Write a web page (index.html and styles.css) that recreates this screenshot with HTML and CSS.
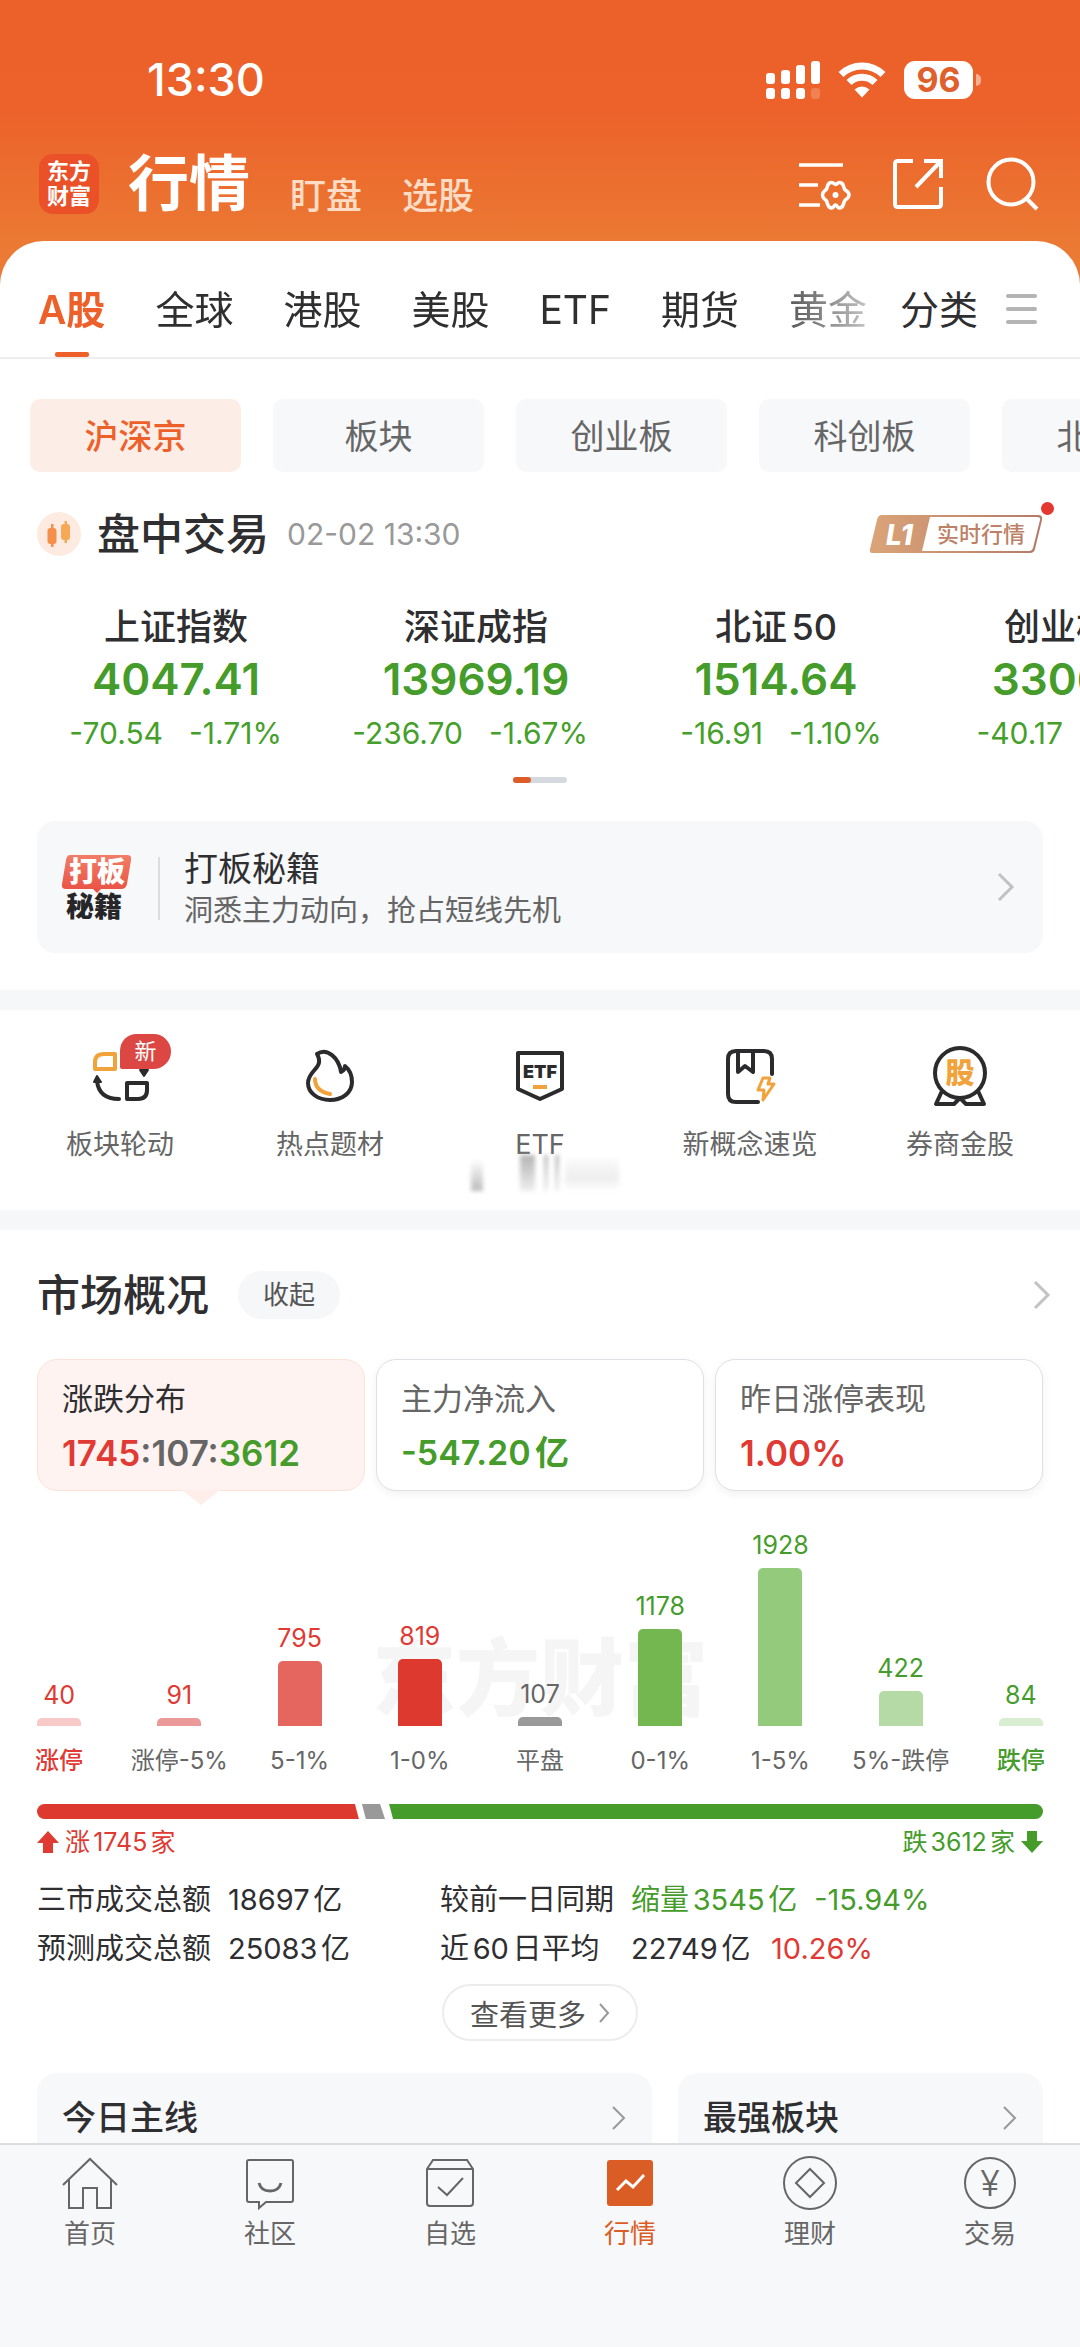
FILE: index.html
```html
<!DOCTYPE html>
<html lang="zh-CN">
<head>
<meta charset="utf-8">
<meta name="viewport" content="width=device-width, initial-scale=1">
<title>行情</title>
<link rel="stylesheet" href="styles.css">
</head>
<body>
<div class="app">
  <div class="status">
    <span class="clock">13:30</span>
    <div class="status-icons">
      <svg width="54" height="38" viewBox="0 0 54 38" fill="#fff" aria-hidden="true">
        <rect x="0" y="12" width="9" height="11" rx="3"/><rect x="15" y="9" width="9" height="14" rx="3"/><rect x="30" y="4" width="9" height="19" rx="3"/><rect x="45" y="0" width="9" height="23" rx="3"/>
        <rect x="0" y="27" width="9" height="11" rx="3"/><rect x="15" y="27" width="9" height="11" rx="3"/><rect x="30" y="27" width="9" height="11" rx="3"/><rect x="45" y="27" width="9" height="11" rx="3" opacity=".2"/>
      </svg>
      <svg width="48" height="36" viewBox="0 0 48 36" aria-hidden="true">
        <g fill="none" stroke="#fff" stroke-width="7"><path d="M3 12.500A30 30 0 0 1 45 12.500"/><path d="M11 20.500A18.500 18.500 0 0 1 37 20.500"/></g>
        <path d="M16.500 27.500Q24 21.500 31.500 27.500L24 35.500Z" fill="#fff"/>
      </svg>
      <div class="battery"><span class="battery-level">96</span></div>
    </div>
  </div>

  <header class="header">
    <div class="logo"><span>东方</span><span>财富</span></div>
    <nav class="titles">
      <a class="title-main" href="#">行情</a>
      <a class="title-sub" href="#">盯盘</a>
      <a class="title-sub" href="#">选股</a>
    </nav>
    <div class="tools">
      <button class="tool" aria-label="设置">
        <svg width="54" height="54" viewBox="0 0 54 54" fill="none" stroke="#fff" stroke-width="3.500">
          <path d="M1 8H45M1 28H20M1 48H22"/>
          <path d="M51 38C51 42 48 41 46.500 44S46 50 42 51C39 51.500 39.500 48 37.500 48S36 51.500 33 51C29 50 30 46.500 28.500 44S24.500 42 24.500 38S27 34.500 28.500 32S29 26 33 25.500C36 25 36 27.500 37.500 27.500S39.500 25 42 25.500C46 26 45 29.500 46.500 32S51 34 51 38Z"/>
          <circle cx="37.500" cy="38" r="3" fill="#fff" stroke="none"/>
        </svg>
      </button>
      <button class="tool" aria-label="分享">
        <svg width="54" height="54" viewBox="0 0 54 54" fill="none" stroke="#fff" stroke-width="4">
          <path d="M21 4H6Q3 4 3 7V47Q3 50 6 50H46Q49 50 49 47V30"/><path d="M32 4H49V21M49 4L24 30"/>
        </svg>
      </button>
      <button class="tool" aria-label="搜索">
        <svg width="54" height="54" viewBox="0 0 54 54" fill="none" stroke="#fff" stroke-width="4">
          <circle cx="25" cy="25" r="22.500"/><path d="M40 41L51 52"/>
        </svg>
      </button>
    </div>
  </header>

  <main class="sheet">
    <nav class="tabs">
      <div class="tab-list">
        <a class="tab tab-active" href="#">A股</a>
        <a class="tab" href="#">全球</a>
        <a class="tab" href="#">港股</a>
        <a class="tab" href="#">美股</a>
        <a class="tab" href="#">ETF</a>
        <a class="tab" href="#">期货</a>
        <a class="tab" href="#">黄金</a>
      </div>
      <a class="tab tab-category" href="#">分类</a>
      <button class="menu" aria-label="菜单"><span></span><span></span><span></span></button>
    </nav>

    <div class="chips">
      <button class="chip chip-active">沪深京</button>
      <button class="chip">板块</button>
      <button class="chip">创业板</button>
      <button class="chip">科创板</button>
      <button class="chip">北交所</button>
    </div>

    <section>
      <div class="session">
        <svg width="44" height="44" viewBox="0 0 44 44" aria-hidden="true">
          <circle cx="22" cy="22" r="22" fill="#fdebe1"/>
          <g fill="#f68e4c"><rect x="10.500" y="16" width="9" height="16" rx="3"/><rect x="14" y="12" width="2.500" height="23"/></g>
          <g fill="#f5a956"><rect x="24" y="12" width="9" height="16" rx="3"/><rect x="27.500" y="9" width="2.500" height="22"/></g>
        </svg>
        <h2 class="heading">盘中交易</h2>
        <time class="session-time">02-02 13:30</time>
        <button class="level" aria-label="L1 实时行情">
          <svg width="174" height="40" viewBox="0 0 174 40">
            <defs><linearGradient id="gold" x1="0" x2="1"><stop offset="0" stop-color="#dba478"/><stop offset="1" stop-color="#b47a68"/></linearGradient></defs>
            <path d="M13 1H169Q174 1 173 6L166 35Q165 39 161 39H4Q0 39 1 35L8 6Q9 1 13 1Z" fill="url(#gold)"/>
            <path d="M61 3H168Q172 3 171 6L164 34Q163 37 160 37H53Z" fill="#fff"/>
            <text x="17" y="31" class="level-tag">L1</text>
            <text x="68" y="28" class="level-text">实时行情</text>
          </svg>
          <span class="dot"></span>
        </button>
      </div>

      <div class="indices">
        <a class="index" href="#"><span class="index-name">上证指数</span><strong class="index-value">4047.41</strong><span class="index-change"><span>-70.54</span><span>-1.71%</span></span></a>
        <a class="index" href="#"><span class="index-name">深证成指</span><strong class="index-value">13969.19</strong><span class="index-change"><span>-236.70</span><span>-1.67%</span></span></a>
        <a class="index" href="#"><span class="index-name">北证50</span><strong class="index-value">1514.64</strong><span class="index-change"><span>-16.91</span><span>-1.10%</span></span></a>
        <a class="index" href="#"><span class="index-name">创业板指</span><strong class="index-value">3306.19</strong><span class="index-change"><span>-40.17</span><span>-1.20%</span></span></a>
      </div>
      <div class="pager"><span></span></div>

      <a class="promo" href="#">
        <svg width="72" height="66" viewBox="0 0 72 66" aria-hidden="true">
          <defs><linearGradient id="coral" x1="0" x2="0" y1="0" y2="1"><stop offset="0" stop-color="#f07e68"/><stop offset="1" stop-color="#ea4f42"/></linearGradient></defs>
          <path d="M9 1H66Q71 1 70 6L66 30Q65 35 60 35H40L36 39L32 35H5Q0 35 1 30L5 6Q6 1 9 1Z" fill="url(#coral)"/>
          <text x="8" y="28" class="promo-logo">打板</text>
          <text x="5" y="63" class="promo-logo promo-logo-dark">秘籍</text>
        </svg>
        <span class="promo-text"><span class="promo-title">打板秘籍</span><span class="promo-sub">洞悉主力动向，抢占短线先机</span></span>
        <svg class="chevron" width="18" height="30" viewBox="0 0 18 30"><path d="M2 2L15 15L2 28"/></svg>
      </a>
    </section>

    <section class="shortcuts">
      <a class="shortcut" href="#">
        <svg width="60" height="60" viewBox="0 0 60 60" fill="none" stroke="#2b2b2d" stroke-width="4" stroke-linejoin="round">
          <path d="M14 8H25V23H5V16Q5 8 14 8Z" stroke="#f1a23b"/>
          <path d="M37 37H57V44Q57 53 48 53H37Z"/><path d="M7 35Q9 53 29 53" stroke-linecap="round"/>
          <path d="M7 30L11 36H4ZM54 30L50 24H58Z" fill="#2b2b2d" stroke-width="2"/>
        </svg>
        <span class="badge">新</span>
        <span>板块轮动</span>
      </a>
      <a class="shortcut" href="#">
        <svg width="60" height="60" viewBox="0 0 60 60" fill="none" stroke="#2b2b2d" stroke-width="4" stroke-linejoin="round" stroke-linecap="round">
          <path d="M17 8C27 1 39 12 41 26Q45 24 45 20C50 24 52 31 52 36C52 47 42 54 30 54S8 47 8 37C8 24 25 22 17 8Z"/>
          <path d="M15 33Q15 45 30 48" stroke="#f1a23b"/>
        </svg>
        <span>热点题材</span>
      </a>
      <a class="shortcut" href="#">
        <svg width="60" height="60" viewBox="0 0 60 60" fill="none" stroke="#2b2b2d" stroke-width="4" stroke-linejoin="round">
          <path d="M8 7H52V43L30 53L8 43Z"/><path d="M23 41H37" stroke="#f1a23b"/>
          <text x="30" y="32" class="etf-mark">ETF</text>
        </svg>
        <span>ETF</span>
        <span class="smudge" aria-hidden="true"><i></i><i></i><i></i><i></i><i></i></span>
      </a>
      <a class="shortcut" href="#">
        <svg width="60" height="60" viewBox="0 0 60 60" fill="none" stroke="#2b2b2d" stroke-width="4" stroke-linecap="round">
          <path d="M38 56H16Q8 56 8 48V13Q8 5 16 5H44Q52 5 52 13V28"/><path d="M18 5V26L25 20L33 26V5" stroke-linejoin="round"/>
          <path d="M43 32H50L48 38H54L43 54L44 44H38Z" stroke="#f1a23b" stroke-width="3" stroke-linejoin="round"/>
        </svg>
        <span>新概念速览</span>
      </a>
      <a class="shortcut" href="#">
        <svg width="60" height="60" viewBox="0 0 60 60" fill="none" stroke="#2b2b2d" stroke-width="4" stroke-linejoin="round">
          <circle cx="30" cy="27" r="25"/><path d="M12 45L6 58H24L30 52L36 58H54L48 45"/>
          <text x="30" y="38" class="stock-mark">股</text>
        </svg>
        <span>券商金股</span>
      </a>
    </section>

    <section class="market">
      <div class="market-head">
        <h2 class="heading">市场概况</h2>
        <button class="fold">收起</button>
        <a class="market-more" href="#" aria-label="市场概况"><svg class="chevron" width="18" height="30" viewBox="0 0 18 30"><path d="M2 2L15 15L2 28"/></svg></a>
      </div>
      <div class="cards">
        <button class="card card-active"><span class="card-name">涨跌分布</span><span class="card-value"><span class="up">1745</span><span class="flat">:107:</span><span class="down">3612</span></span></button>
        <button class="card"><span class="card-name">主力净流入</span><span class="card-value down">-547.20亿</span></button>
        <button class="card"><span class="card-name">昨日涨停表现</span><span class="card-value up">1.00%</span></button>
      </div>
    </section>

    <section class="chart">
      <div class="watermark" aria-hidden="true">东方财富</div>
      <div class="bar-col"><span class="up">40</span><div class="bar red-1" style="height:8px"></div><span class="bar-label up strong">涨停</span></div>
      <div class="bar-col"><span class="up">91</span><div class="bar red-2" style="height:8px"></div><span class="bar-label">涨停-5%</span></div>
      <div class="bar-col"><span class="up">795</span><div class="bar red-3" style="height:65px"></div><span class="bar-label">5-1%</span></div>
      <div class="bar-col"><span class="up">819</span><div class="bar red-4" style="height:67px"></div><span class="bar-label">1-0%</span></div>
      <div class="bar-col"><span class="flat">107</span><div class="bar grey" style="height:9px"></div><span class="bar-label">平盘</span></div>
      <div class="bar-col"><span class="down">1178</span><div class="bar green-4" style="height:97px"></div><span class="bar-label">0-1%</span></div>
      <div class="bar-col"><span class="down">1928</span><div class="bar green-3" style="height:158px"></div><span class="bar-label">1-5%</span></div>
      <div class="bar-col"><span class="down">422</span><div class="bar green-2" style="height:35px"></div><span class="bar-label">5%-跌停</span></div>
      <div class="bar-col"><span class="down">84</span><div class="bar green-1" style="height:8px"></div><span class="bar-label down strong">跌停</span></div>
    </section>

    <section class="summary">
      <div class="ratio"><span class="ratio-up" style="width:32%"></span><span class="ratio-flat" style="width:2.6%"></span><span class="ratio-down"></span></div>
      <div class="ratio-legend">
        <span class="legend up"><svg width="22" height="22" viewBox="0 0 22 22" fill="currentColor"><path d="M11 0L22 12H16V22H6V12H0Z"/></svg>涨1745家</span>
        <span class="legend down">跌3612家<svg width="22" height="22" viewBox="0 0 22 22" fill="currentColor"><path d="M11 22L0 10H6V0H16V10H22Z"/></svg></span>
      </div>
      <table class="stats">
        <tr><th>三市成交总额</th><td class="total">18697亿</td><th>较前一日同期</th><td><span class="amount down">缩量3545亿</span><span class="down">-15.94%</span></td></tr>
        <tr><th>预测成交总额</th><td class="total">25083亿</td><th>近60日平均</th><td><span class="amount">22749亿</span><span class="up">10.26%</span></td></tr>
      </table>
      <button class="more">查看更多<svg class="chevron" width="12" height="20" viewBox="0 0 12 20"><path d="M2 1L10 10L2 19"/></svg></button>
      <div class="panels">
        <a class="panel" href="#">今日主线<svg class="chevron" width="16" height="26" viewBox="0 0 16 26"><path d="M2 2L13 13L2 24"/></svg></a>
        <a class="panel" href="#">最强板块<svg class="chevron" width="16" height="26" viewBox="0 0 16 26"><path d="M2 2L13 13L2 24"/></svg></a>
      </div>
    </section>
  </main>

  <nav class="tabbar">
    <a class="tabbar-item" href="#"><svg width="56" height="56" viewBox="0 0 56 56"><path d="M1 29L28 3L55 29M7 24V52H21V32H35V52H49V24"/></svg>首页</a>
    <a class="tabbar-item" href="#"><svg width="56" height="56" viewBox="0 0 56 56"><path d="M7 4H49Q51 4 51 6V44Q51 46 49 46H24L17 52V46H7Q5 46 5 44V6Q5 4 7 4Z"/><path d="M17 27Q19 35 28 35T39 27" stroke-width="3"/></svg>社区</a>
    <a class="tabbar-item" href="#"><svg width="56" height="56" viewBox="0 0 56 56"><path d="M5 13L11 4H45L51 13V47Q51 50 48 50H8Q5 50 5 47ZM5 13H51M16 31L25 39L41 22"/></svg>自选</a>
    <a class="tabbar-item tabbar-active" href="#"><svg width="56" height="56" viewBox="0 0 56 56"><rect x="5" y="4" width="46" height="46" rx="3" class="solid"/><path class="trend" d="M15 34L24 25L31 31L42 19"/></svg>行情</a>
    <a class="tabbar-item" href="#"><svg width="56" height="56" viewBox="0 0 56 56"><circle cx="28" cy="27" r="26"/><path d="M28 13L42 27L28 41L14 27Z"/></svg>理财</a>
    <a class="tabbar-item" href="#"><svg width="56" height="56" viewBox="0 0 56 56"><circle cx="28" cy="27" r="25"/><text x="28" y="40" class="yen">¥</text></svg>交易</a>
  </nav>
</div>
</body>
</html>
```
FILE: styles.css
```css
* { box-sizing: border-box; }

body {
  margin: 0;
  background: #fff;
  color: #2f2f31;
  font-family: Inter, "Noto Sans CJK SC", sans-serif;
  text-autospace: normal;
}

a { color: inherit; text-decoration: none; }

button {
  margin: 0;
  padding: 0;
  border: 0;
  background: none;
  color: inherit;
  font: inherit;
}

svg { display: block; flex: none; }

.up { color: #e03a34; }
.down { color: #459c2b; }
.flat { color: #666; }

.app {
  display: flex;
  flex-direction: column;
  height: 100vh;
  background: linear-gradient(#ec602a 0, #ec622a 110px, #eb7a34 250px);
}

/* status bar */
.status {
  display: flex;
  flex: none;
  justify-content: space-between;
  align-items: center;
  height: 110px;
  padding: 50px 99px 0 147px;
  color: #fff;
}

.clock { font-size: 45px; line-height: 60px; font-weight: 500; }

.status-icons { display: flex; align-items: center; gap: 18px; }

.battery { display: flex; align-items: center; gap: 3px; }

.battery::after {
  width: 5px;
  height: 12px;
  border-radius: 0 6px 6px 0;
  background: #ffffff80;
  content: "";
}

.battery-level {
  width: 69px;
  border-radius: 11px;
  background: #fff;
  color: #e0602c;
  font-size: 34px;
  line-height: 38px;
  font-weight: 700;
  text-align: center;
}

/* header */
.header {
  display: flex;
  flex: none;
  align-items: center;
  height: 131px;
  padding: 17px 40px 0 39px;
}

.logo {
  display: flex;
  flex-direction: column;
  align-items: center;
  justify-content: center;
  width: 60px;
  height: 60px;
  border-radius: 14px;
  background: #ea5128;
  color: #fff;
  font-size: 22px;
  line-height: 25px;
  font-weight: 700;
}

.titles { display: flex; align-items: flex-end; gap: 40px; margin-left: 29px; }
.title-main { color: #fff; font-size: 61px; line-height: 64px; font-weight: 700; }
.title-sub { color: #ffdcc6; font-size: 36px; line-height: 40px; font-weight: 500; }

.tools { display: flex; gap: 40px; margin-left: auto; }

/* market tabs */
.sheet {
  flex: 1;
  min-height: 0;
  overflow: hidden;
  border-radius: 44px 44px 0 0;
  background: #fff;
}

.tabs {
  display: flex;
  align-items: stretch;
  height: 118px;
  padding: 20px 43px 0 38px;
  border-bottom: 2px solid #eee;
  font-size: 39px;
  line-height: 98px;
  text-autospace: no-autospace;
}

.tab-list {
  display: flex;
  flex: 1;
  gap: 50px;
  min-width: 0;
  margin-right: 30px;
  overflow: hidden;
  mask-image: linear-gradient(to right, #000 calc(100% - 110px), #0004);
}

.tab { flex: none; white-space: nowrap; }

.tab-active { position: relative; color: #ee602a; font-weight: 600; }

.tab-active::after {
  position: absolute;
  bottom: 0;
  left: 50%;
  width: 34px;
  height: 5px;
  margin-left: -17px;
  border-radius: 2px;
  background: #ee602a;
  content: "";
}

.menu {
  display: flex;
  flex-direction: column;
  justify-content: center;
  gap: 9px;
  width: 31px;
  margin-left: 28px;
}

.menu span { height: 4px; border-radius: 2px; background: #b4b4b6; }

.chips {
  display: flex;
  gap: 32px;
  padding: 40px 0 0 30px;
  overflow: hidden;
}

.chip {
  flex: none;
  width: 211px;
  padding-top: 2px;
  border-radius: 10px;
  background: #f7f8fa;
  color: #666;
  font-size: 34px;
  line-height: 71px;
}

.chip-active { background: #fceee6; color: #ee602a; font-weight: 500; }

/* trading session */
.session {
  display: flex;
  align-items: center;
  height: 62px;
  margin-top: 31px;
  padding: 0 37px;
}

.heading { margin: 0; font-size: 43px; line-height: 48px; font-weight: 500; }
.session .heading { margin-left: 16px; }
.session-time { margin-left: 18px; color: #999; font-size: 30px; }

.level { position: relative; margin-left: auto; }
.level-tag { fill: #fff; font-size: 28px; font-weight: 800; font-style: italic; }
.level-text { fill: #bd8168; font-size: 22px; font-weight: 500; }

.dot {
  position: absolute;
  top: -12px;
  right: -11px;
  width: 13px;
  height: 13px;
  border-radius: 50%;
  background: #e3382f;
}

.indices { display: flex; padding: 40px 0 0 26px; overflow: hidden; }

.index {
  display: flex;
  flex: none;
  flex-direction: column;
  align-items: center;
  width: 300px;
}

.index-name { font-size: 36px; line-height: 44px; font-weight: 500; }
.index-value { margin-top: 2px; color: #459c2b; font-size: 44px; line-height: 56px; font-weight: 600; }

.index-change {
  display: grid;
  grid-template-columns: 1fr 1fr;
  gap: 26px;
  align-self: stretch;
  margin-top: 6px;
  color: #45a02b;
  font-size: 30px;
  line-height: 40px;
}

.index-change span:first-child { text-align: right; }

.pager { width: 54px; height: 6px; margin: 24px auto 0; border-radius: 3px; background: #d5d8de; }
.pager span { display: block; width: 18px; height: 6px; border-radius: 3px; background: #dd5d29; }

.promo {
  display: flex;
  align-items: center;
  height: 132px;
  margin: 38px 37px 37px;
  padding: 0 28px 0 24px;
  border-radius: 18px;
  background: #f7f8fa;
}

.promo-logo { fill: #fff; font-size: 28px; font-weight: 900; }
.promo-logo-dark { fill: #262628; }

.promo-text {
  display: flex;
  flex: 1;
  flex-direction: column;
  position: relative;
  margin-left: 25px;
  padding: 5px 0 0 26px;
}

.promo-text::before {
  position: absolute;
  top: 14px;
  bottom: 12px;
  left: 0;
  width: 2px;
  background: #dcdde0;
  content: "";
}

.promo-title { font-size: 34px; line-height: 42px; }
.promo-sub { color: #666; font-size: 29px; line-height: 42px; }

.chevron { fill: none; stroke: #c2c2c4; stroke-width: 3; }

/* shortcuts */
.shortcuts {
  display: grid;
  grid-template-columns: repeat(5, 1fr);
  height: 240px;
  padding: 36px 15px 0;
  border: solid #f6f7f9;
  border-width: 20px 0;
}

.shortcut {
  display: flex;
  flex-direction: column;
  align-items: center;
  gap: 21px;
  position: relative;
  color: #666;
  font-size: 27px;
  line-height: 36px;
}

.badge {
  position: absolute;
  top: -12px;
  left: 50%;
  width: 51px;
  border-radius: 17px 18px 18px 2px;
  background: #dc4643;
  color: #fff;
  font-size: 22px;
  line-height: 35px;
  text-align: center;
}

.etf-mark { fill: #2b2b2d; stroke: none; font-size: 18px; font-weight: 900; text-anchor: middle; }
.stock-mark { fill: #f1a23b; stroke: none; font-size: 29px; font-weight: 900; text-anchor: middle; }

/* fading reflection under the ETF shortcut */
.smudge {
  display: flex;
  position: absolute;
  top: 109px;
  left: 50%;
  width: 154px;
  height: 36px;
  margin-left: -75px;
  filter: blur(2px);
}

.smudge i:nth-child(1) { width: 12px; margin: 4px 37px 0 6px; background: linear-gradient(#fff0, #bbb); }
.smudge i:nth-child(2) { width: 15px; margin-right: 9px; background: linear-gradient(#b4b4b4, #eee); }
.smudge i:nth-child(3) { width: 4px; margin-right: 7px; background: linear-gradient(#bbb, #eee); }
.smudge i:nth-child(4) { width: 4px; margin-right: 6px; background: linear-gradient(#bbb, #eee); }
.smudge i:nth-child(5) { width: 54px; background: linear-gradient(#fff, #f5f5f5, #eee, #fff); }

/* market overview */
.market { padding: 41px 37px 0; }
.market-head { display: flex; align-items: center; height: 48px; }
.market-more { margin-right: -8px; margin-left: auto; }

.fold {
  width: 102px;
  margin-left: 29px;
  border-radius: 24px;
  background: #f6f7f9;
  color: #555;
  font-size: 26px;
  line-height: 48px;
}

.cards { display: grid; grid-template-columns: repeat(3, 1fr); gap: 11px; margin-top: 40px; }

.card {
  display: flex;
  flex-direction: column;
  align-items: flex-start;
  gap: 12px;
  position: relative;
  height: 132px;
  padding: 19px 24px;
  border: 1px solid #dfe0e3;
  border-radius: 20px;
  background: #fff;
  box-shadow: 0 3px 10px #0000000f;
}

.card-active { border-color: #fbe3d8; background: #fef3f0; box-shadow: none; }

.card-active::after {
  position: absolute;
  top: 100%;
  left: 50%;
  width: 38px;
  height: 15px;
  margin-left: -19px;
  background: #fdeee9;
  clip-path: polygon(0 0, 100% 0, 50% 100%);
  content: "";
}

.card-name { color: #666; font-size: 31px; line-height: 40px; }
.card-active .card-name { color: #2f2f31; }
.card-value { font-size: 35px; line-height: 44px; font-weight: 600; }
.card-value.down { font-size: 34px; }

/* distribution chart */
.chart {
  display: grid;
  grid-template-columns: repeat(9, 1fr);
  position: relative;
  height: 250px;
  margin: 37px -1px 0;
  color: #666;
  font-size: 25px;
  line-height: 34px;
  text-autospace: no-autospace;
}

.bar-col {
  display: flex;
  flex-direction: column;
  align-items: center;
  justify-content: flex-end;
  position: relative;
  white-space: nowrap;
}

.bar { width: 44px; margin-top: 6px; border-radius: 5px 5px 0 0; }
.bar-label { margin-top: 18px; font-size: 24px; }
.strong { font-weight: 500; }

.red-1 { background: #f7cac9; }
.red-2 { background: #ec999a; }
.red-3 { background: #e5655f; }
.red-4 { background: #de392f; }
.grey { background: #999; }
.green-4 { background: #74b751; }
.green-3 { background: #93ca7b; }
.green-2 { background: #b5daa5; }
.green-1 { background: #d9edd1; }

.watermark {
  position: absolute;
  top: 98px;
  right: 0;
  left: 0;
  color: #f5f5f5;
  font-size: 84px;
  line-height: 106px;
  font-weight: 900;
  text-align: center;
}

/* turnover summary */
.summary { padding: 26px 37px 0; }

.ratio { display: flex; height: 15px; overflow: hidden; border-radius: 8px; }
.ratio-up { background: #de392f; clip-path: polygon(0 0, calc(100% - 4px) 0, 100% 100%, 0 100%); }
.ratio-flat { background: #999; clip-path: polygon(3px 0, calc(100% - 5px) 0, 100% 100%, 7px 100%); }
.ratio-down { flex: 1; background: #459c2b; clip-path: polygon(4px 0, 100% 0, 100% 100%, 8px 100%); }

.ratio-legend { display: flex; justify-content: space-between; margin-top: 6px; font-size: 25px; line-height: 34px; }
.legend { display: flex; align-items: center; gap: 6px; }

.stats {
  width: 100%;
  margin-top: 16px;
  border-collapse: collapse;
  table-layout: fixed;
  font-size: 29px;
  line-height: 49px;
  text-align: left;
  white-space: nowrap;
}

.stats th { width: 191px; padding: 0; font-weight: 400; }
.stats td { padding: 0; }
.stats .total { width: 212px; }
.amount { margin-right: 17px; }

.more {
  display: flex;
  align-items: center;
  justify-content: center;
  gap: 12px;
  width: 196px;
  height: 57px;
  margin: 11px auto 0;
  border: 2px solid #ececee;
  border-radius: 29px;
  color: #555;
  font-size: 29px;
}

.more .chevron { stroke: #999; stroke-width: 2; }

.panels { display: grid; grid-template-columns: 615fr 365fr; gap: 26px; margin-top: 32px; }

.panel {
  display: flex;
  align-items: center;
  justify-content: space-between;
  height: 90px;
  padding: 0 25px;
  border-radius: 20px 20px 0 0;
  background: #f7f8fa;
  font-size: 34px;
  line-height: 44px;
  font-weight: 500;
}

.panel .chevron { stroke: #999; stroke-width: 2; }

/* bottom tab bar */
.tabbar {
  display: grid;
  flex: none;
  grid-template-columns: repeat(6, 1fr);
  height: 204px;
  padding-top: 11px;
  border-top: 2px solid #dcdde0;
  background: #f7f8fa;
}

.tabbar-item {
  display: flex;
  flex-direction: column;
  align-items: center;
  gap: 4px;
  color: #666;
  font-size: 26px;
  line-height: 36px;
}

.tabbar-item svg { fill: none; stroke: #666; stroke-width: 2; }
.tabbar-active { color: #db5d26; }
.tabbar-item .solid { fill: #db5d26; stroke: none; }
.tabbar-item .trend { stroke: #fff; stroke-width: 3; }
.tabbar-item .yen { fill: #666; stroke: none; font-size: 36px; font-weight: 300; text-anchor: middle; }
```
